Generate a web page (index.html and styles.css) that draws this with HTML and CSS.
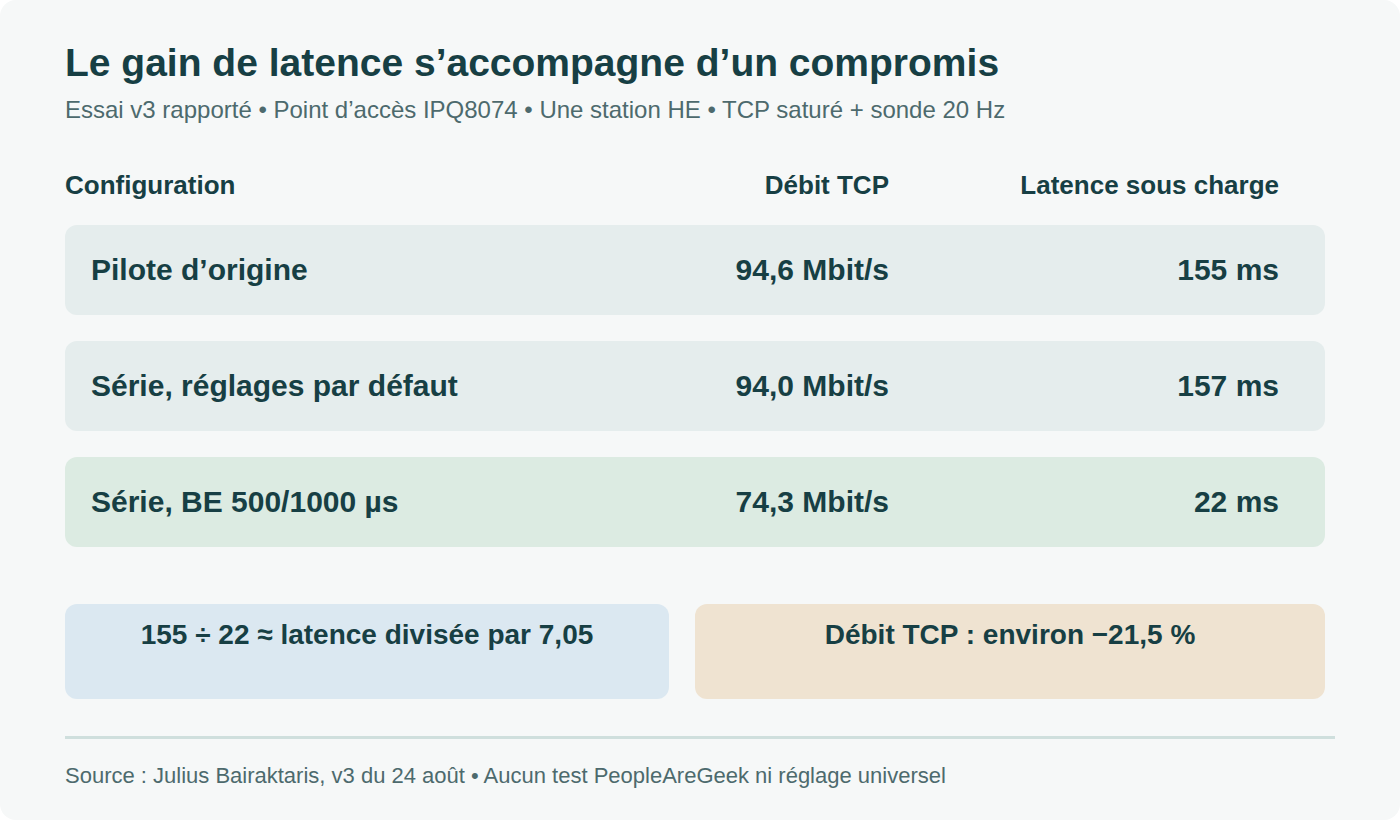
FILE: index.html
```html
<!DOCTYPE html>
<html lang="fr">
<head>
<meta charset="utf-8">
<title>Le gain de latence</title>
<link rel="stylesheet" href="styles.css">
</head>
<body>
<main class="card">
  <h1 class="title">Le gain de latence s’accompagne d’un compromis</h1>
  <p class="subtitle">Essai v3 rapporté • Point d’accès IPQ8074 • Une station HE • TCP saturé + sonde 20 Hz</p>

  <section class="table">
    <div class="head">
      <span>Configuration</span>
      <span class="num">Débit TCP</span>
      <span class="num">Latence sous charge</span>
    </div>
    <div class="row">
      <span>Pilote d’origine</span>
      <span class="num">94,6 Mbit/s</span>
      <span class="num">155 ms</span>
    </div>
    <div class="row">
      <span>Série, réglages par défaut</span>
      <span class="num">94,0 Mbit/s</span>
      <span class="num">157 ms</span>
    </div>
    <div class="row row-good">
      <span>Série, BE 500/1000 µs</span>
      <span class="num">74,3 Mbit/s</span>
      <span class="num">22 ms</span>
    </div>
  </section>

  <section class="callouts">
    <div class="callout callout-blue">155 ÷ 22 ≈ latence divisée par 7,05</div>
    <div class="callout callout-sand">Débit TCP : environ −21,5 %</div>
  </section>

  <hr class="divider">
  <p class="source">Source : Julius Bairaktaris, v3 du 24 août • Aucun test PeopleAreGeek ni réglage universel</p>
</main>
</body>
</html>
```

FILE: styles.css
```css
html, body {
  margin: 0;
  padding: 0;
  background: #ffffff;
}

body {
  font-family: "Liberation Sans", Arial, sans-serif;
  color: #173f44;
}

.card {
  width: 1400px;
  height: 820px;
  box-sizing: border-box;
  background: #f6f8f8;
  border-radius: 16px;
  padding: 40px 65px 0;
  overflow: hidden;
}

.title {
  margin: 0;
  font-size: 39px;
  line-height: 46px;
  font-weight: 700;
  color: #173f44;
}

.subtitle {
  margin: 9px 0 0;
  font-size: 24px;
  line-height: 30px;
  color: #4d6a6d;
}

.table {
  width: 1260px;
  margin-top: 45px;
  display: flex;
  flex-direction: column;
  gap: 26px;
}

.head,
.row {
  display: grid;
  grid-template-columns: 1fr 300px 390px;
  align-items: center;
  box-sizing: border-box;
}

.head {
  padding: 0 46px 0 0;
  height: 30px;
  font-size: 26px;
  font-weight: 700;
  margin-bottom: -1px;
}

.row {
  height: 90px;
  padding: 0 46px 0 26px;
  border-radius: 12px;
  background: #e5eded;
  font-size: 30px;
  font-weight: 700;
}

.row-good {
  background: #dcebe2;
}

.num {
  text-align: right;
}

.callouts {
  width: 1260px;
  margin-top: 57px;
  display: grid;
  grid-template-columns: 604fr 630fr;
  gap: 26px;
}

.callout {
  height: 95px;
  box-sizing: border-box;
  border-radius: 12px;
  padding-top: 13px;
  text-align: center;
  font-size: 28px;
  line-height: 36px;
  font-weight: 700;
}

.callout-blue {
  background: #dbe8f1;
}

.callout-sand {
  background: #efe3d1;
}

.divider {
  margin: 37px 0 0;
  border: 0;
  height: 3px;
  background: #cfdfdd;
}

.source {
  margin: 24px 0 0;
  font-size: 22px;
  line-height: 26px;
  color: #4d6a6d;
}
```
